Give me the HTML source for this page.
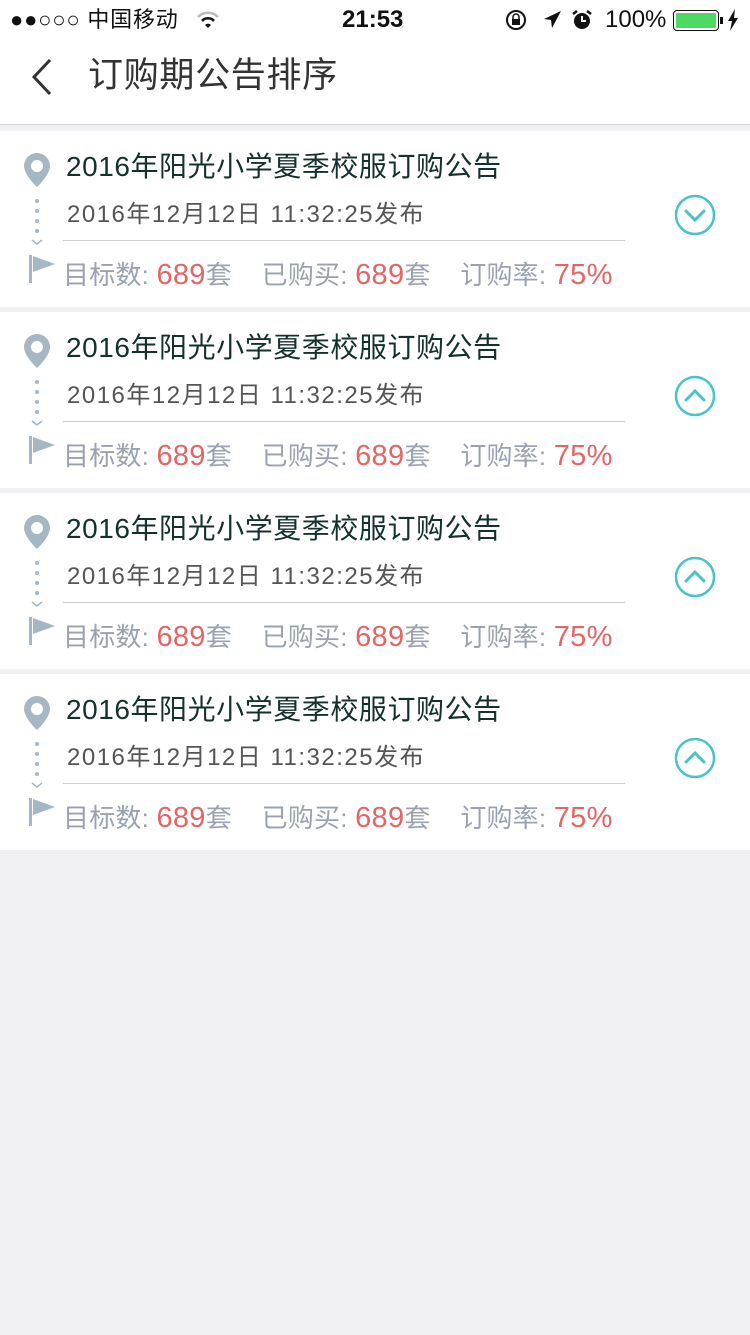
<!DOCTYPE html>
<html><head><meta charset="utf-8"><style>
*{margin:0;padding:0;box-sizing:border-box}
body{width:750px;height:1335px;background:#efeff4;font-family:"Liberation Sans","Noto Sans CJK SC",sans-serif;position:relative;overflow:hidden}
.abs{position:absolute;white-space:nowrap}
.sb{position:absolute;top:0;left:0;width:750px;height:40px;background:#fff}
.nav{position:absolute;top:40px;left:0;width:750px;height:85px;background:#fff;border-bottom:1px solid #d8d8dc}
.card{position:absolute;left:0;width:750px;height:176px;background:#fff}
.t{left:66px;top:16px;font-size:28px;color:#14312f;line-height:40px;letter-spacing:0.55px}
.d{left:67px;top:68px;font-size:24px;color:#555;line-height:32px;letter-spacing:1.5px}
.ln{position:absolute;left:63px;top:109px;width:562px;height:1px;background:#cfcfcf}
.s{left:63px;top:126px;font-size:26px;color:#9aa2b2;line-height:36px;letter-spacing:0.2px}
.s b{font-weight:normal;color:#e46565;font-size:29px;letter-spacing:0.3px}
</style></head><body>
<div class="sb">
<div class="abs" style="left:10px;top:7px;font-size:22px;color:#111;line-height:26px;letter-spacing:0.8px">●●○○○ 中国移动</div>
<svg class="abs" style="left:196px;top:10px" width="24" height="20" viewBox="0 0 24 20"><path d="M2 7a14 14 0 0 1 20 0" stroke="#bbb" stroke-width="2.5" fill="none"/><path d="M6 11a8 8 0 0 1 12 0" stroke="#111" stroke-width="2.5" fill="none"/><path d="M9 15l3 3 3-3a4 4 0 0 0-6 0z" fill="#111"/></svg>
<div class="abs" style="left:342px;top:6px;font-size:24px;font-weight:bold;color:#111;line-height:28px">21:53</div>
<svg class="abs" style="left:505px;top:8px" width="24" height="24" viewBox="0 0 24 24"><circle cx="11" cy="12" r="9" stroke="#111" stroke-width="2" fill="none"/><rect x="7" y="11" width="8" height="6" fill="#111"/><path d="M8 11v-2a3 3 0 0 1 6 0v2" stroke="#111" stroke-width="1.5" fill="none"/></svg>
<svg class="abs" style="left:540px;top:8px" width="24" height="24" viewBox="0 0 24 24"><path d="M21 3L4 11l7 1 1 8z" fill="#111"/></svg>
<svg class="abs" style="left:570px;top:8px" width="24" height="24" viewBox="0 0 24 24"><circle cx="12" cy="13" r="8" fill="#111"/><path d="M12 8v5h4" stroke="#fff" stroke-width="2" fill="none"/><path d="M3 6l4-3M21 6l-4-3" stroke="#111" stroke-width="2.5"/></svg>
<div class="abs" style="left:605px;top:6px;font-size:24px;color:#111;line-height:28px">100%</div>
<div class="abs" style="left:673px;top:10px;width:46px;height:21px;border:1.5px solid #111;border-radius:4px;padding:2px"><div style="width:100%;height:100%;background:#4cd964;border-radius:1px"></div></div>
<div class="abs" style="left:720px;top:17px;width:3px;height:7px;background:#111"></div>
<svg class="abs" style="left:727px;top:9px" width="12" height="22" viewBox="0 0 12 22"><path d="M8 0L1 12h4l-2 10 8-13H7z" fill="#111"/></svg>
</div>
<div class="nav">
<svg class="abs" style="left:30px;top:18px" width="24" height="38" viewBox="0 0 24 38"><path d="M20 2L4 19l16 17" stroke="#333" stroke-width="3" fill="none"/></svg>
<div class="abs" style="left:88px;top:15px;font-size:35px;color:#333;line-height:42px;letter-spacing:0.7px">订购期公告排序</div>
</div>
<div id="cards"></div>
<script>
var tops=[131,312,493,674];
var h='';
tops.forEach(function(y,i){
var up=i>0;
h+='<div class="card" style="top:'+y+'px">'+
'<svg class="abs" style="left:20px;top:20px" width="40" height="135" viewBox="0 0 40 135">'+
'<path d="M17 2a13 13 0 0 0-13 13c0 9 13 21 13 21s13-12 13-21a13 13 0 0 0-13-13z" fill="#a6b7c4"/><circle cx="17" cy="15" r="6" fill="#fff"/>'+
'<circle cx="17" cy="50" r="2" fill="#a6b7c4"/><circle cx="17" cy="60" r="2" fill="#a6b7c4"/><circle cx="17" cy="70" r="2" fill="#a6b7c4"/><circle cx="17" cy="80" r="2" fill="#a6b7c4"/>'+
'<path d="M12 89l5 4 5-4" stroke="#a6b7c4" stroke-width="1.5" fill="none"/>'+
'<rect x="9" y="104" width="3" height="28" fill="#a6b7c4"/><path d="M13 105l22 8-22 8z" fill="#a6b7c4"/></svg>'+
'<div class="abs t">2016年阳光小学夏季校服订购公告</div>'+
'<div class="abs d">2016年12月12日 11:32:25发布</div>'+
'<div class="ln"></div>'+
'<div class="abs s">目标数: <b>689</b>套&nbsp;&nbsp;&nbsp; 已购买: <b>689</b>套&nbsp;&nbsp;&nbsp; 订购率: <b>75%</b></div>'+
'<svg class="abs" style="left:674px;top:63px" width="42" height="42" viewBox="0 0 42 42"><circle cx="21" cy="21" r="19" stroke="#47c4c9" stroke-width="2.5" fill="none"/>'+
(up?'<path d="M12 25l9-9 9 9" stroke="#47c4c9" stroke-width="3" fill="none" stroke-linecap="round"/>':'<path d="M12 17l9 9 9-9" stroke="#47c4c9" stroke-width="3" fill="none" stroke-linecap="round"/>')+
'</svg></div>';
});
document.getElementById('cards').innerHTML=h;
</script>
</body></html>
